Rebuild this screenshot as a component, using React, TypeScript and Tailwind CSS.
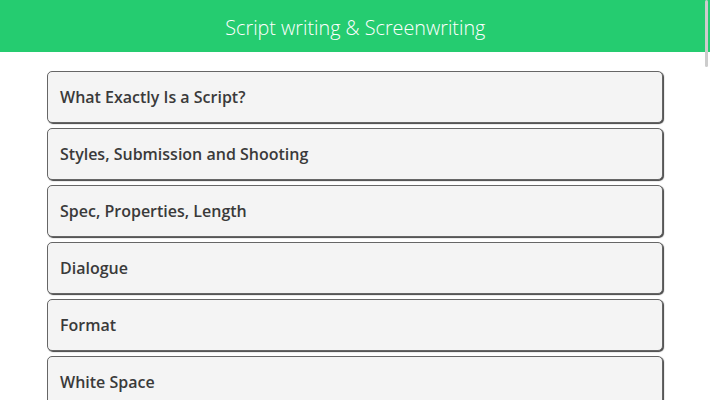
import React from "react";

const items = [
  "What Exactly Is a Script?",
  "Styles, Submission and Shooting",
  "Spec, Properties, Length",
  "Dialogue",
  "Format",
  "White Space",
  "Structure",
  "Scenes",
];

export default function App() {
  return (
    <div className="w-full bg-white" style={{ fontFamily: '"Open Sans", sans-serif' }}>
      <header className="h-[52px] bg-[#25cc70] flex items-center justify-center pt-[2px]">
        <h1 className="inline-block text-white text-[21px] font-light leading-none scale-x-[0.94]">
          Script writing &amp; Screenwriting
        </h1>
      </header>
      <main className="pt-[19px] pl-[47px] pr-[45px] flex flex-col gap-[5px] pb-4">
        {items.map((t) => (
          <div
            key={t}
            className="h-[52px] w-[616px] rounded-[5px] border border-[#666] bg-[#f4f4f4] shadow-[1px_1px_1px_#444] flex items-center px-[12px]"
          >
            <span className="text-[#3a3a3a] text-[16px] font-semibold">{t}</span>
          </div>
        ))}
      </main>
      <div className="fixed top-0 right-[2px] w-[3px] h-[67px] rounded-full bg-[#cccccc]" />
    </div>
  );
}
